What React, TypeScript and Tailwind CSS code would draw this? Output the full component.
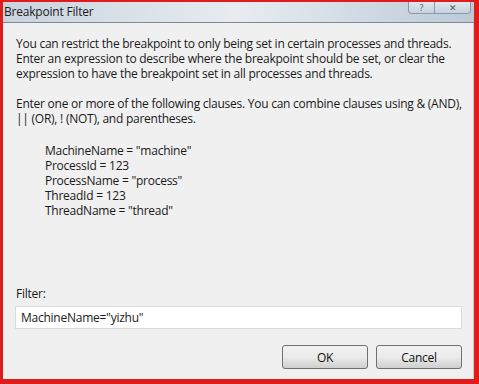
import React from 'react';

const font = { fontFamily: '"Open Sans", "Noto Sans", sans-serif' };

const clauses = [
	'MachineName = "machine"',
	'ProcessId = 123',
	'ProcessName = "process"',
	'ThreadId = 123',
	'ThreadName = "thread"',
];

/**
 * Windows 7 style dialog button.
 */
const DialogButton = ({ label }: { label: string }) => (
	<button className="h-[24px] w-[86px] rounded-[3px] border border-[#707070] bg-gradient-to-b from-[#f2f2f2] via-[#ebebeb] to-[#cfcfcf] text-[12px] tracking-[-0.25px] text-[#111]">
		{label}
	</button>
);

export default function App() {
	return (
		<div
			className="flex h-[384px] w-[479px] flex-col overflow-hidden border-b-[5px] border-l-[3px] border-r-[5px] border-t-[2px] border-[#e01b1b] bg-[#f0f0f0]"
			style={font}
		>
			{/* Title bar */}
			<div className="relative flex h-[20px] shrink-0 items-center bg-gradient-to-r from-[#c9d3de] via-[#e8ecf1] to-[#bccad8] pl-[1px]">
				<span className="text-[12px] leading-none tracking-[-0.2px] text-[#1c1c1c]">Breakpoint Filter</span>
				<div className="absolute right-[3px] top-0 flex h-[12px]">
					<div className="flex w-[27px] items-center justify-center rounded-bl-[4px] border border-t-0 border-[#8a9aab] bg-gradient-to-b from-[#dfe6ee] to-[#c7d2dd] text-[9px] leading-none text-[#555]">
						?
					</div>
					<div className="flex w-[36px] items-center justify-center rounded-br-[4px] border border-l-0 border-t-0 border-[#8a9aab] bg-gradient-to-b from-[#dfe6ee] to-[#c7d2dd] text-[9px] leading-none text-[#555]">
						✕
					</div>
				</div>
			</div>
			<div className="h-px shrink-0 bg-[#7d8a98]" />

			{/* Content */}
			<div className="flex flex-1 flex-col whitespace-nowrap border-r border-[#c8c8c8] bg-[#f0f0f0] pl-[12px] pr-[11px] pt-[13px] text-[12px] leading-[15px] tracking-[-0.25px] text-[#1a1a1a]">
				<p className="pl-px">
					You can restrict the breakpoint to only being set in certain processes and threads.
					<br />
					Enter an expression to describe where the breakpoint should be set, or clear the
					<br />
					expression to have the breakpoint set in all processes and threads.
				</p>
				<p className="mt-[15px] pl-px">
					Enter one or more of the following clauses. You can combine clauses using &amp; (AND),
					<br />
					|| (OR), ! (NOT), and parentheses.
				</p>
				<p className="mt-[17px] pl-[30px]">
					{clauses.map((c, i) => (
						<React.Fragment key={c}>
							{i > 0 && <br />}
							{c}
						</React.Fragment>
					))}
				</p>

				<div className="mt-auto flex flex-col pb-[10px]">
					<label className="pl-px">Filter:</label>
					<div className="mt-[5px] flex h-[23px] items-center border border-[#dcdcdc] bg-white px-[5px]">
						MachineName="yizhu"
					</div>
					<div className="mt-[16px] flex justify-end gap-[8px]">
						<DialogButton label="OK" />
						<DialogButton label="Cancel" />
					</div>
				</div>
			</div>
		</div>
	);
}
